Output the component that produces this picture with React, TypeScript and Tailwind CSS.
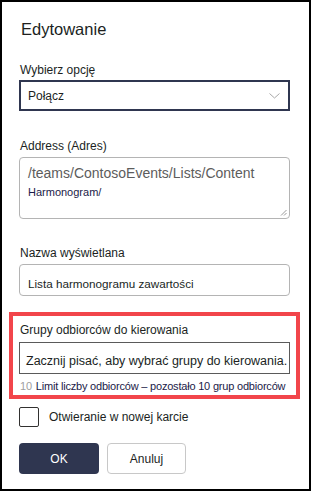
const Label = ({ children }: { children: React.ReactNode }) => (
  <div className="h-[18px] flex items-center pl-px text-[12px] text-[#201f1e]">{children}</div>
);

const App = () => {
  return (
    <div className="w-[311px] h-[491px] border-2 border-black bg-white font-['Liberation_Sans',Arial,sans-serif] text-[#201f1e] overflow-hidden">
      <div className="pl-[17px] pr-[19px] flex flex-col">
        <h1 className="mt-[15px] h-[24px] flex items-center pl-[2px] text-[16.5px] font-normal">Edytowanie</h1>

        <div className="mt-[20px]">
          <Label>Wybierz opcję</Label>
        </div>
        <div className="mt-px h-[31px] border-2 border-[#2f3650] flex items-center justify-between pl-[7px] pr-[8px] text-[12px]">
          <span>Połącz</span>
          <svg width="11" height="6" viewBox="0 0 11 6" fill="none" stroke="#a8a8a8" strokeWidth="1">
            <path d="M0.5 0.5 L5.5 5 L10.5 0.5" />
          </svg>
        </div>

        <div className="mt-[26px]">
          <Label>Address (Adres)</Label>
        </div>
        <div className="mt-[2px] h-[62px] relative rounded-[4px] border border-[#b4b4b4] pl-[8px] pt-[5px]">
          <div className="text-[14px] leading-[20px] text-[#5c5c5c]">/teams/ContosoEvents/Lists/Content</div>
          <div className="mt-[2px] text-[11px] leading-[14px] text-[#1b1a48]">Harmonogram/</div>
          <svg className="absolute right-[2px] bottom-[2px]" width="7" height="7" viewBox="0 0 7 7" stroke="#9a9a9a" strokeWidth="1">
            <path d="M6.5 1 L1 6.5 M6.5 4 L4 6.5" />
          </svg>
        </div>

        <div className="mt-[25px]">
          <Label>Nazwa wyświetlana</Label>
        </div>
        <div className="mt-[2px] h-[32px] rounded-[4px] border border-[#b4b4b4] flex items-center pl-[8px] pt-[8px] text-[11.7px]">
          Lista harmonogramu zawartości
        </div>

        <div className="mt-[16px] -mx-[10px] h-[87px] border-4 border-[#f2454b] px-[6px]">
          <div className="mt-[5px]">
            <Label>Grupy odbiorców do kierowania</Label>
          </div>
          <div className="mt-[3px] h-[32px] border border-[#5a5a5a] flex items-center pl-[6px] pt-[6px] text-[12.5px] whitespace-nowrap">
            Zacznij pisać, aby wybrać grupy do kierowania.
          </div>
          <div className="mt-[3px] h-[18px] flex items-center pl-px text-[11px] tracking-[-0.2px] whitespace-nowrap">
            <span className="text-[#a0a0a0] mr-[4px]">10</span>
            <span className="text-[#1b1a48]">Limit liczby odbiorców – pozostało 10 grup odbiorców</span>
          </div>
        </div>

        <div className="mt-[8px] h-[20px] flex items-center gap-[10px]">
          <div className="w-[20px] h-[20px] rounded-[2px] border border-[#323130]" />
          <span className="text-[12px]">Otwieranie w nowej karcie</span>
        </div>

        <div className="mt-[16px] flex gap-[8px]">
          <button className="w-[80px] h-[31px] rounded-[4px] bg-[#2f3650] text-white text-[12px]">OK</button>
          <button className="w-[79px] h-[31px] rounded-[4px] border border-[#c8c8c8] bg-white text-[12px] text-[#201f1e]">Anuluj</button>
        </div>
      </div>
    </div>
  );
};

export default App;
